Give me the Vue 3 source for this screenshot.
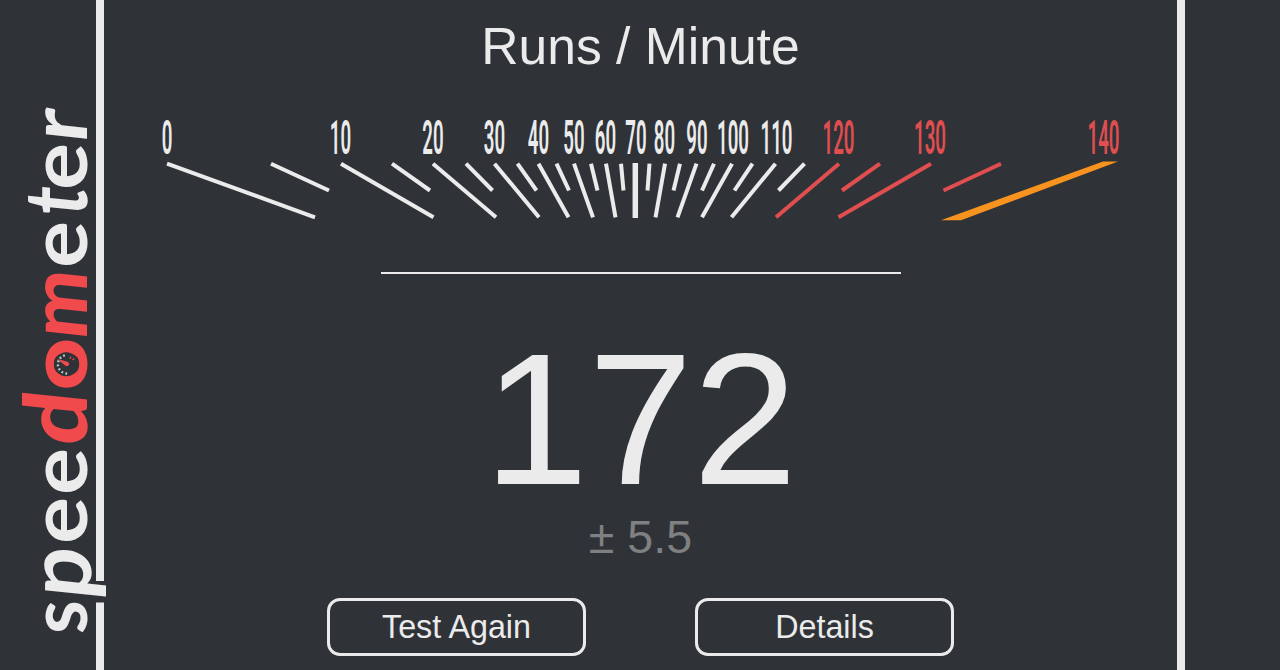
<template>
  <div class="page">
    <!-- Logo -->
    <svg class="logo" viewBox="0 0 120 670" role="img" aria-label="speedometer">
      <rect class="logo-gap" x="94" y="581" width="12" height="21.5" />
      <text v-for="(letter, i) in letters" :key="i" class="logo-letter" :class="{ red: letter.red }"
        :transform="letterTransform(letter)">{{ letter.char }}</text>
      <!-- Small dial inside the o -->
      <g transform="translate(66.3 364.3)">
        <circle class="dial-face" r="12" />
        <path class="dial-ticks" d="M0.8 9.2 A9.2 9.2 0 0 1 0.8 -9.2" />
        <path class="dial-needle" d="M-9.5 -5.5 L1 -2.6 A2.3 2.3 0 1 1 -1.4 1 Z" />
        <path class="dial-red" d="M4.6 -7.6 L3.6 -5.6 M7.9 -5.8 L6.4 -4.4" />
      </g>
    </svg>

    <main class="panel">
      <h1>Runs / Minute</h1>

      <svg class="gauge" viewBox="150 110 980 120">
        <line v-for="(tick, i) in ticks" :key="'t' + i" :x1="tick[0]" y1="163.7" :x2="tick[1]"
          :y2="tick[2] ? 190.5 : 217.3" class="tick" :class="{ red: tick[0] > 820 }" />
        <line class="tick middle" x1="635.3" y1="163" x2="635.3" y2="218" />
        <polygon class="end-tick" points="1103,161.5 1118,161.5 961,220.3 941,220.3" />
        <text v-for="label in labels" :key="label.value" class="label" :class="{ red: label.value >= 120 }"
          :transform="`translate(${label.x} 154) scale(0.385 1)`">{{ label.value }}</text>
      </svg>

      <hr />
      <div class="result">172</div>
      <div class="confidence">± 5.5</div>

      <div class="buttons">
        <button type="button">Test Again</button>
        <button type="button">Details</button>
      </div>
    </main>
  </div>
</template>

<script setup>
// pos is the left edge of each letter, measured along the vertical wordmark
const letters = [
  { char: 's', pos: 634, sx: 0.96 },
  { char: 'p', pos: 600.5, sx: 1.12, sy: 1.12, base: 91, skew: -6 },
  { char: 'e', pos: 544, sx: 1.1 },
  { char: 'e', pos: 495, sx: 1.1 },
  { char: 'd', pos: 447.5, sx: 1.17, sy: 1.09, skew: -6, red: true },
  { char: 'o', pos: 390.5, sx: 1.14, red: true },
  { char: 'm', pos: 340.5, sx: 1.01, skew: -6, red: true },
  { char: 'e', pos: 268, sx: 1.1 },
  { char: 't', pos: 218, sx: 0.93, sy: 1.1, skew: -6 },
  { char: 'e', pos: 190, sx: 1.1 },
  { char: 'r', pos: 144, sx: 1.09, skew: -6 }
]

const letterTransform = ({ pos, sx, sy = 1, base = 87.4, skew = 0 }) =>
  `translate(${base} ${pos}) rotate(-90) skewX(${skew}) scale(${sx} ${sy})`

// [top x, bottom x, short]
const ticks = [
  [167, 315], [271, 329, true], [341, 433.5], [392, 430, true],
  [433, 496], [466, 492.5, true], [494.5, 539], [517.5, 536.5, true],
  [538.5, 568.5], [556.5, 569, true], [574, 593], [591, 597.5, true],
  [606, 615.5], [621, 623.5, true], [649.5, 647.5, true], [665, 655.5],
  [680, 673.5, true], [696.5, 677.5], [714, 702, true], [732, 702],
  [752.5, 734.5, true], [775.5, 731.5], [804.5, 778.5, true],
  [839, 776], [880, 842, true], [931, 838.5], [1001, 943.5, true]
]

const labels = [
  { value: 0, x: 167 }, { value: 10, x: 340.5 }, { value: 20, x: 433 },
  { value: 30, x: 494.5 }, { value: 40, x: 538.5 }, { value: 50, x: 574 },
  { value: 60, x: 605.5 }, { value: 70, x: 636 }, { value: 80, x: 664.5 },
  { value: 90, x: 697 }, { value: 100, x: 733 }, { value: 110, x: 776.5 },
  { value: 120, x: 838.5 }, { value: 130, x: 930 }, { value: 140, x: 1103.5 }
]
</script>

<style>
body {
  margin: 0;
  background: #2f3237;
}
</style>

<style scoped>
.page {
  position: relative;
  height: 670px;
  overflow: hidden;
  background: #2f3237;
  color: #ebebeb;
  font-family: "Liberation Sans", Arial, sans-serif;
}

.panel {
  box-sizing: border-box;
  display: flex;
  flex-direction: column;
  align-items: center;
  width: 1089px;
  height: 670px;
  margin-left: 96px;
  border: solid #ebebeb;
  border-width: 0 8px;
}

h1 {
  margin: 16px 0 0;
  font-size: 51.6px;
  font-weight: 400;
  line-height: 60px;
}

.gauge {
  flex: none;
  width: 980px;
  height: 120px;
  margin-top: 34px;
  margin-right: 1px;
}

.tick {
  stroke: #ebebeb;
  stroke-width: 4;
}

.tick.red {
  stroke: #e04e50;
}

.tick.middle {
  stroke-width: 5.5;
}

.end-tick {
  fill: #f7931e;
}

.label {
  font-family: Roboto, sans-serif;
  font-size: 48.5px;
  font-weight: 600;
  text-anchor: middle;
  fill: #ebebeb;
}

.label.red {
  fill: #e04e50;
}

hr {
  flex: none;
  width: 520px;
  height: 2px;
  margin: 42px 0 0;
  border: 0;
  background: #ebebeb;
}

.result {
  height: 188px;
  margin-top: 51px;
  font-size: 188px;
  line-height: 188px;
}

.confidence {
  margin-top: -3px;
  color: #7f8081;
  font-size: 46.6px;
  line-height: 54px;
}

.buttons {
  display: flex;
  gap: 109px;
  margin-top: 34px;
}

button {
  box-sizing: border-box;
  width: 259px;
  height: 58px;
  padding: 0;
  border: 3px solid #ebebeb;
  border-radius: 13px;
  background: transparent;
  color: #ebebeb;
  font-family: inherit;
  font-size: 32.3px;
}

.logo {
  position: absolute;
  top: 0;
  left: 0;
  width: 120px;
  height: 670px;
}

.logo-gap,
.dial-face {
  fill: #2f3237;
}

.logo-letter {
  font-family: Lato, sans-serif;
  font-size: 80px;
  font-weight: 700;
  fill: #ebebeb;
}

.logo-letter.red {
  font-weight: 900;
  fill: #f04a4c;
}

.dial-ticks {
  fill: none;
  stroke: #b5cdcc;
  stroke-width: 2.4;
  stroke-dasharray: 1.8 2.3;
}

.dial-needle {
  fill: #f04a4c;
}

.dial-red {
  stroke: #f04a4c;
  stroke-width: 1.4;
}
</style>
